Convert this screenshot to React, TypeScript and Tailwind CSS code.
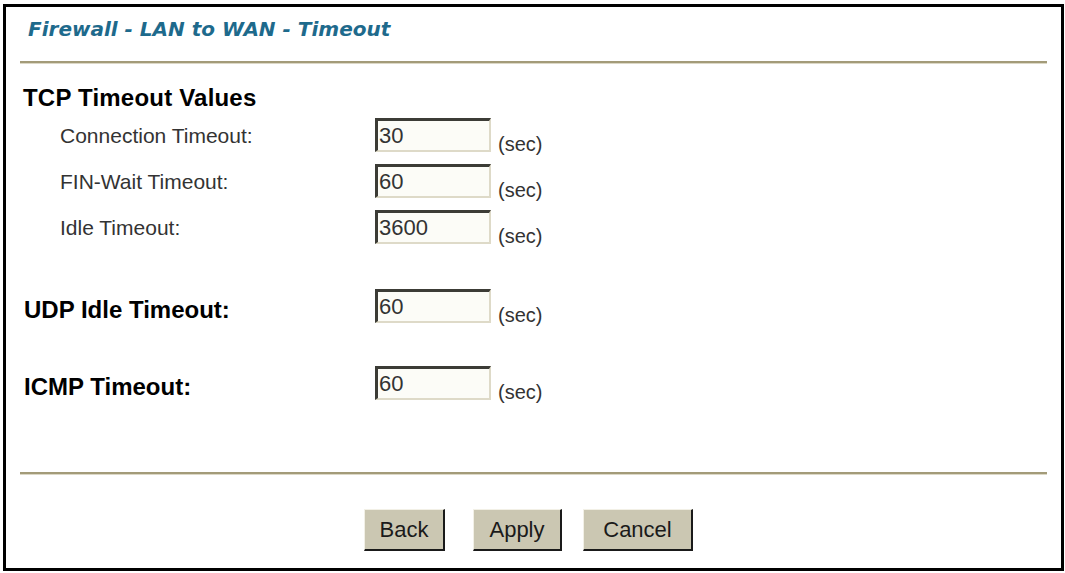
import React from 'react';

const Rule: React.FC = () => (
  <div className="mx-[14px] h-[3px] border-t-2 border-b border-t-[#a39b79] border-b-[#dcd8c6]" />
);

const TimeoutInput: React.FC<{ value: string }> = ({ value }) => (
  <div className="flex items-end">
    <div className="w-[116px] h-[34px] bg-[#fcfcf7] border-t-[3px] border-l-[3px] border-r-2 border-b-2 border-t-[#3c3c36] border-l-[#3c3c36] border-r-[#dedac8] border-b-[#dedac8] flex items-center pl-[1px] text-[22px] text-[#333] leading-none">
      {value}
    </div>
    <span className="ml-[7px] mb-[-3px] text-[20px] text-[#333] leading-[22px]">(sec)</span>
  </div>
);

const Field: React.FC<{ label: string; value: string; bold?: boolean }> = ({ label, value, bold }) => (
  <div className="grid grid-cols-[355px_auto] items-center">
    <span
      className={
        bold
          ? 'pl-[4px] text-[24px] font-bold text-black leading-none mt-[8px]'
          : 'pl-[40px] text-[21px] text-[#333] leading-none'
      }
    >
      {label}
    </span>
    <TimeoutInput value={value} />
  </div>
);

const Button: React.FC<{ label: string; width: string }> = ({ label, width }) => (
  <button
    className={`${width} h-[42px] bg-[#cbc7b2] border-t border-l border-t-[#f2f0e6] border-l-[#f2f0e6] border-r-2 border-b-2 border-r-[#1a1a1a] border-b-[#1a1a1a] text-[22px] text-[#1a1a1a] leading-none`}
  >
    {label}
  </button>
);

export default function App() {
  return (
    <div className="min-h-[573px] bg-white pl-[3px] pt-[4px] font-['Liberation_Sans',Arial,sans-serif]">
      <div className="w-[1061px] h-[567px] border-[3px] border-black flex flex-col">
        <h1 className="mt-[10px] pl-[22px] h-[24px] flex items-center font-['DejaVu_Sans',Verdana,sans-serif] font-bold italic text-[20px] text-[#1e6a8c]">
          Firewall - LAN to WAN - Timeout
        </h1>
        <div className="mt-[20px]">
          <Rule />
        </div>

        <div className="px-[14px]">
          <div className="mt-[21px] h-[26px] flex items-center pl-[3px] text-[24px] font-bold text-black tracking-[0.2px]">
            TCP Timeout Values
          </div>
          <div className="mt-[7px] flex flex-col gap-[12px]">
            <Field label="Connection Timeout:" value="30" />
            <Field label="FIN-Wait Timeout:" value="60" />
            <Field label="Idle Timeout:" value="3600" />
          </div>
          <div className="mt-[45px]">
            <Field label="UDP Idle Timeout:" value="60" bold />
          </div>
          <div className="mt-[43px]">
            <Field label="ICMP Timeout:" value="60" bold />
          </div>
        </div>

        <div className="mt-[72px]">
          <Rule />
        </div>

        <div className="mt-[34px] flex justify-center pr-[10px]">
          <Button label="Back" width="w-[81px]" />
          <div className="w-[28px]" />
          <Button label="Apply" width="w-[89px]" />
          <div className="w-[21px]" />
          <Button label="Cancel" width="w-[110px]" />
        </div>
      </div>
    </div>
  );
}
